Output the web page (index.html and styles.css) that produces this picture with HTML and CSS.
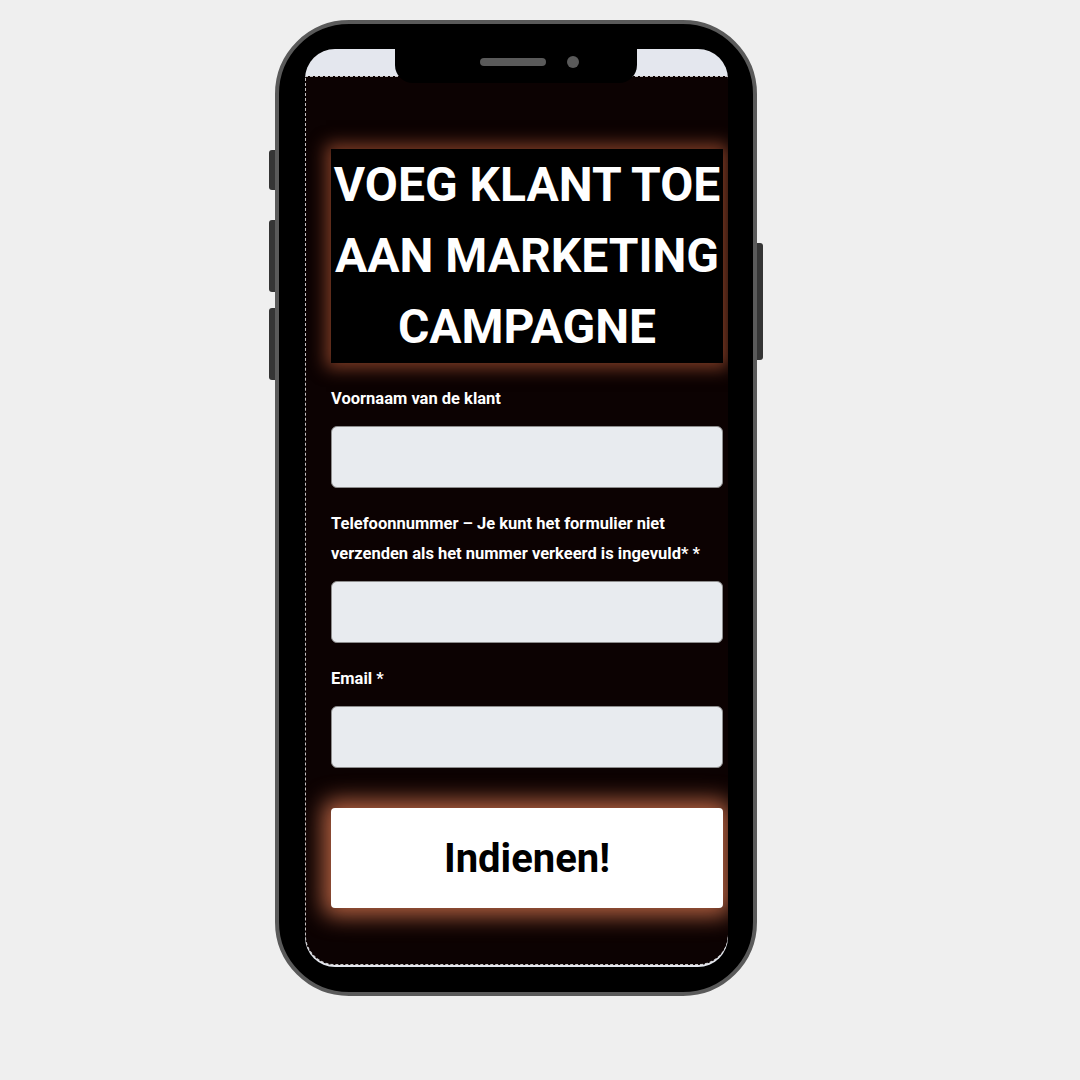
FILE: index.html
```html
<!DOCTYPE html>
<html lang="nl">
<head>
<meta charset="utf-8">
<title>Voeg klant toe</title>
<link rel="stylesheet" href="styles.css">
</head>
<body>
<div class="phone">
  <span class="btn btn-l1"></span>
  <span class="btn btn-l2"></span>
  <span class="btn btn-l3"></span>
  <span class="btn btn-r"></span>
  <div class="notch"><span class="speaker"></span><span class="camera"></span></div>
  <div class="screen">
    <form class="content">
      <h1 class="title">VOEG KLANT TOE AAN MARKETING CAMPAGNE</h1>
      <label class="label">Voornaam van de klant</label>
      <div class="input"></div>
      <label class="label">Telefoonnummer – Je kunt het formulier niet verzenden als het nummer verkeerd is ingevuld* *</label>
      <div class="input"></div>
      <label class="label">Email *</label>
      <div class="input"></div>
      <div class="submit">Indienen!</div>
    </form>
  </div>
</div>
</body>
</html>
```
FILE: styles.css
```css
html, body {
  margin: 0;
  padding: 0;
}
body {
  width: 1080px;
  height: 1080px;
  background: #efefef;
  box-sizing: border-box;
  padding: 20px 0 0 275px;
  font-family: Roboto, "Liberation Sans", sans-serif;
}
.phone {
  position: relative;
  width: 482px;
  height: 976px;
  box-sizing: border-box;
  border: 4px solid #5a5a5a;
  border-radius: 74px;
  background: #000;
  padding: 25px 25px 25px 26px;
}
.btn {
  position: absolute;
  width: 6px;
  background: #353535;
}
.btn-l1, .btn-l2, .btn-l3 {
  left: -10px;
  border-radius: 3px 0 0 3px;
}
.btn-l1 { top: 126px; height: 40px; }
.btn-l2 { top: 196px; height: 72px; }
.btn-l3 { top: 284px; height: 72px; }
.btn-r {
  right: -10px;
  top: 219px;
  height: 117px;
  border-radius: 0 3px 3px 0;
}
.notch {
  position: absolute;
  top: 0;
  left: 116px;
  width: 242px;
  height: 59px;
  background: #000;
  border-radius: 0 0 18px 18px;
  z-index: 2;
}
.speaker {
  position: absolute;
  left: 85px;
  top: 34px;
  width: 66px;
  height: 8px;
  border-radius: 4px;
  background: #5a5a5a;
}
.camera {
  position: absolute;
  left: 172px;
  top: 32px;
  width: 12px;
  height: 12px;
  border-radius: 50%;
  background: #5a5a5a;
}
.screen {
  height: 918px;
  background: #e4e7ee;
  border-radius: 30px;
  overflow: hidden;
  padding-top: 27px;
  box-sizing: border-box;
}
.content {
  display: flex;
  flex-direction: column;
  height: 889px;
  box-sizing: border-box;
  margin: 0;
  background: #0c0202;
  border: 1px dashed rgba(255,255,255,0.75);
  border-right: none;
  border-radius: 0 0 30px 30px;
  padding: 72px 5px 0 25px;
}
.title {
  margin: 0 0 21px;
  background: #000;
  color: #fff;
  font-weight: 700;
  font-size: 48px;
  line-height: 71px;
  text-align: center;
  height: 214px;
  box-shadow: 0 0 16px 5px rgba(140, 68, 42, 0.9);
}
.label {
  display: block;
  color: #fff;
  font-weight: 700;
  font-size: 16.5px;
  line-height: 30px;
  margin-bottom: 12px;
}
.input {
  height: 62px;
  box-sizing: border-box;
  background: #e8ebef;
  border: 1px solid #8d8d8d;
  border-radius: 6px;
  margin-bottom: 21px;
}
.input:last-of-type {
  margin-bottom: 0;
}
.submit {
  margin-top: 19px;
  height: 100px;
  background: #fff;
  border-radius: 4px;
  display: flex;
  align-items: center;
  justify-content: center;
  color: #000;
  font-weight: 700;
  font-size: 40px;
  box-shadow: 0 0 22px 8px rgba(196, 106, 72, 0.9);
}
```
